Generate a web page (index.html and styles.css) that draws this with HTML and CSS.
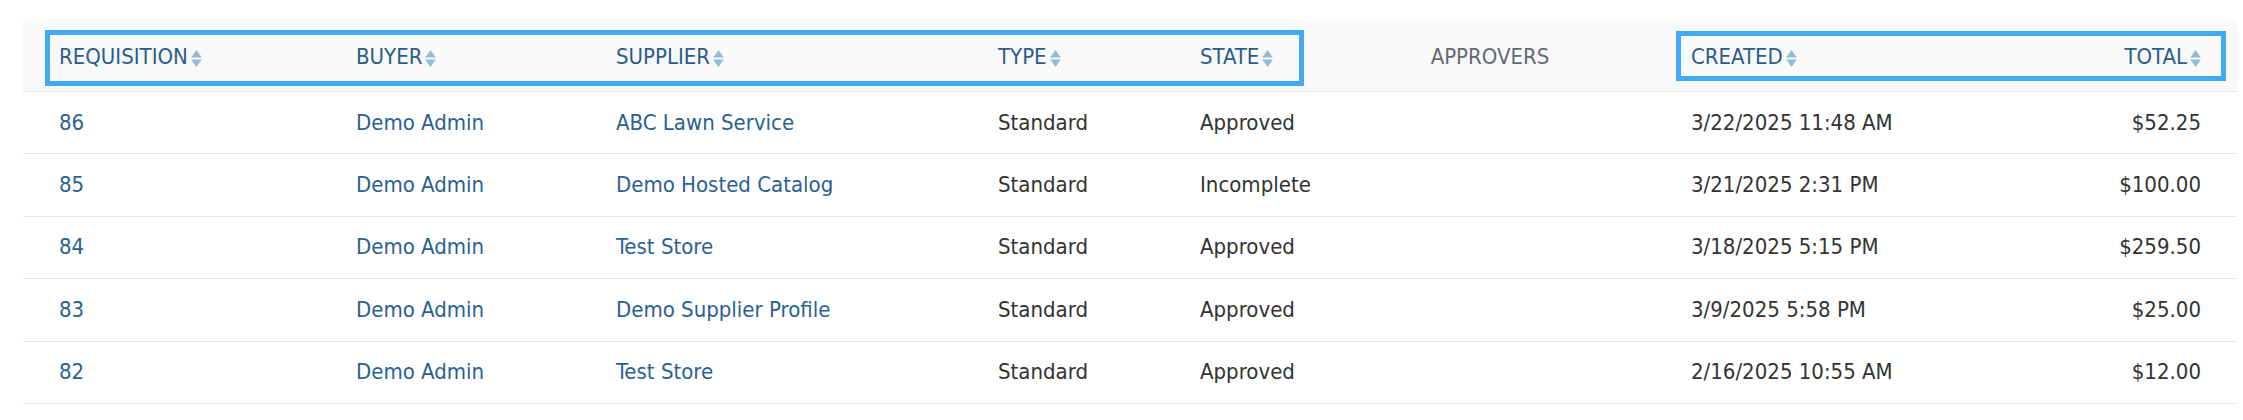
FILE: index.html
```html
<!DOCTYPE html>
<html lang="en">
<head>
<meta charset="utf-8">
<title>Requisitions</title>
<link rel="stylesheet" href="styles.css">
</head>
<body>
<div class="grid-wrap">
  <table class="req-table">
    <colgroup>
      <col class="c-req"><col class="c-buyer"><col class="c-supplier"><col class="c-type"><col class="c-state"><col class="c-appr"><col class="c-created"><col class="c-total">
    </colgroup>
    <thead>
      <tr>
        <th><span class="sortable">Requisition<svg class="sort" viewBox="0 0 10 16"><polygon points="5,0 10,7 0,7"/><polygon points="0,9 10,9 5,16"/></svg></span></th>
        <th><span class="sortable">Buyer<svg class="sort" viewBox="0 0 10 16"><polygon points="5,0 10,7 0,7"/><polygon points="0,9 10,9 5,16"/></svg></span></th>
        <th><span class="sortable">Supplier<svg class="sort" viewBox="0 0 10 16"><polygon points="5,0 10,7 0,7"/><polygon points="0,9 10,9 5,16"/></svg></span></th>
        <th><span class="sortable">Type<svg class="sort" viewBox="0 0 10 16"><polygon points="5,0 10,7 0,7"/><polygon points="0,9 10,9 5,16"/></svg></span></th>
        <th><span class="sortable">State<svg class="sort" viewBox="0 0 10 16"><polygon points="5,0 10,7 0,7"/><polygon points="0,9 10,9 5,16"/></svg></span></th>
        <th class="center plain">Approvers</th>
        <th><span class="sortable">Created<svg class="sort" viewBox="0 0 10 16"><polygon points="5,0 10,7 0,7"/><polygon points="0,9 10,9 5,16"/></svg></span></th>
        <th class="right"><span class="sortable">Total<svg class="sort" viewBox="0 0 10 16"><polygon points="5,0 10,7 0,7"/><polygon points="0,9 10,9 5,16"/></svg></span></th>
      </tr>
    </thead>
    <tbody>
      <tr>
        <td><a>86</a></td><td><a>Demo Admin</a></td><td><a>ABC Lawn Service</a></td><td>Standard</td><td>Approved</td><td></td><td>3/22/2025 11:48 AM</td><td class="right">$52.25</td>
      </tr>
      <tr>
        <td><a>85</a></td><td><a>Demo Admin</a></td><td><a>Demo Hosted Catalog</a></td><td>Standard</td><td>Incomplete</td><td></td><td>3/21/2025 2:31 PM</td><td class="right">$100.00</td>
      </tr>
      <tr>
        <td><a>84</a></td><td><a>Demo Admin</a></td><td><a>Test Store</a></td><td>Standard</td><td>Approved</td><td></td><td>3/18/2025 5:15 PM</td><td class="right">$259.50</td>
      </tr>
      <tr>
        <td><a>83</a></td><td><a>Demo Admin</a></td><td><a>Demo Supplier Profile</a></td><td>Standard</td><td>Approved</td><td></td><td>3/9/2025 5:58 PM</td><td class="right">$25.00</td>
      </tr>
      <tr>
        <td><a>82</a></td><td><a>Demo Admin</a></td><td><a>Test Store</a></td><td>Standard</td><td>Approved</td><td></td><td>2/16/2025 10:55 AM</td><td class="right">$12.00</td>
      </tr>
    </tbody>
  </table>
  <div class="highlight hl-left"></div>
  <div class="highlight hl-right"></div>
</div>
</body>
</html>
```
FILE: styles.css
```css
html, body {
  margin: 0;
  padding: 0;
  background: #ffffff;
}

body {
  font-family: "DejaVu Sans", sans-serif;
  font-stretch: condensed;
  font-size: 22px;
  color: #333333;
}

.grid-wrap {
  position: relative;
  width: 2214px;
  margin: 19px 0 0 23px;
}

.req-table {
  width: 2214px;
  table-layout: fixed;
  border-collapse: collapse;
  border-spacing: 0;
}

.c-req { width: 297px; }
.c-buyer { width: 260px; }
.c-supplier { width: 382px; }
.c-type { width: 202px; }
.c-state { width: 161px; }
.c-appr { width: 330px; }
.c-created { width: 305px; }
.c-total { width: 277px; }

.req-table th {
  background: #f9f9f9;
  height: 72px;
  box-sizing: border-box;
  padding: 23px 36px 19px 36px;
  line-height: 30px;
  text-align: left;
  font-weight: normal;
  text-transform: uppercase;
  color: #2b5d8a;
  border-bottom: 1px solid #e7e7e7;
  white-space: nowrap;
  vertical-align: middle;
}

.req-table th.plain {
  color: #646a73;
}

.req-table th.center { text-align: center; }
.req-table .right { text-align: right; }

.sortable {
  display: inline-flex;
  align-items: center;
  gap: 3px;
}

.sort {
  width: 11px;
  height: 17px;
  fill: #93bbd4;
  flex: none;
  position: relative;
  top: 1px;
}

.req-table tbody tr {
  height: 62.4px;
}

.req-table td {
  box-sizing: border-box;
  padding: 0 36px;
  line-height: 30px;
  border-bottom: 1px solid #e7e7e7;
  white-space: nowrap;
  vertical-align: middle;
  color: #333333;
}

.req-table td a {
  color: #2a6192;
  text-decoration: none;
}

.highlight {
  position: absolute;
  box-sizing: border-box;
  border: 5px solid #40aaf5;
  pointer-events: none;
}

.hl-left {
  left: 22px;
  top: 11px;
  width: 1259px;
  height: 56px;
}

.hl-right {
  left: 1653px;
  top: 12px;
  width: 550px;
  height: 50px;
}
```
